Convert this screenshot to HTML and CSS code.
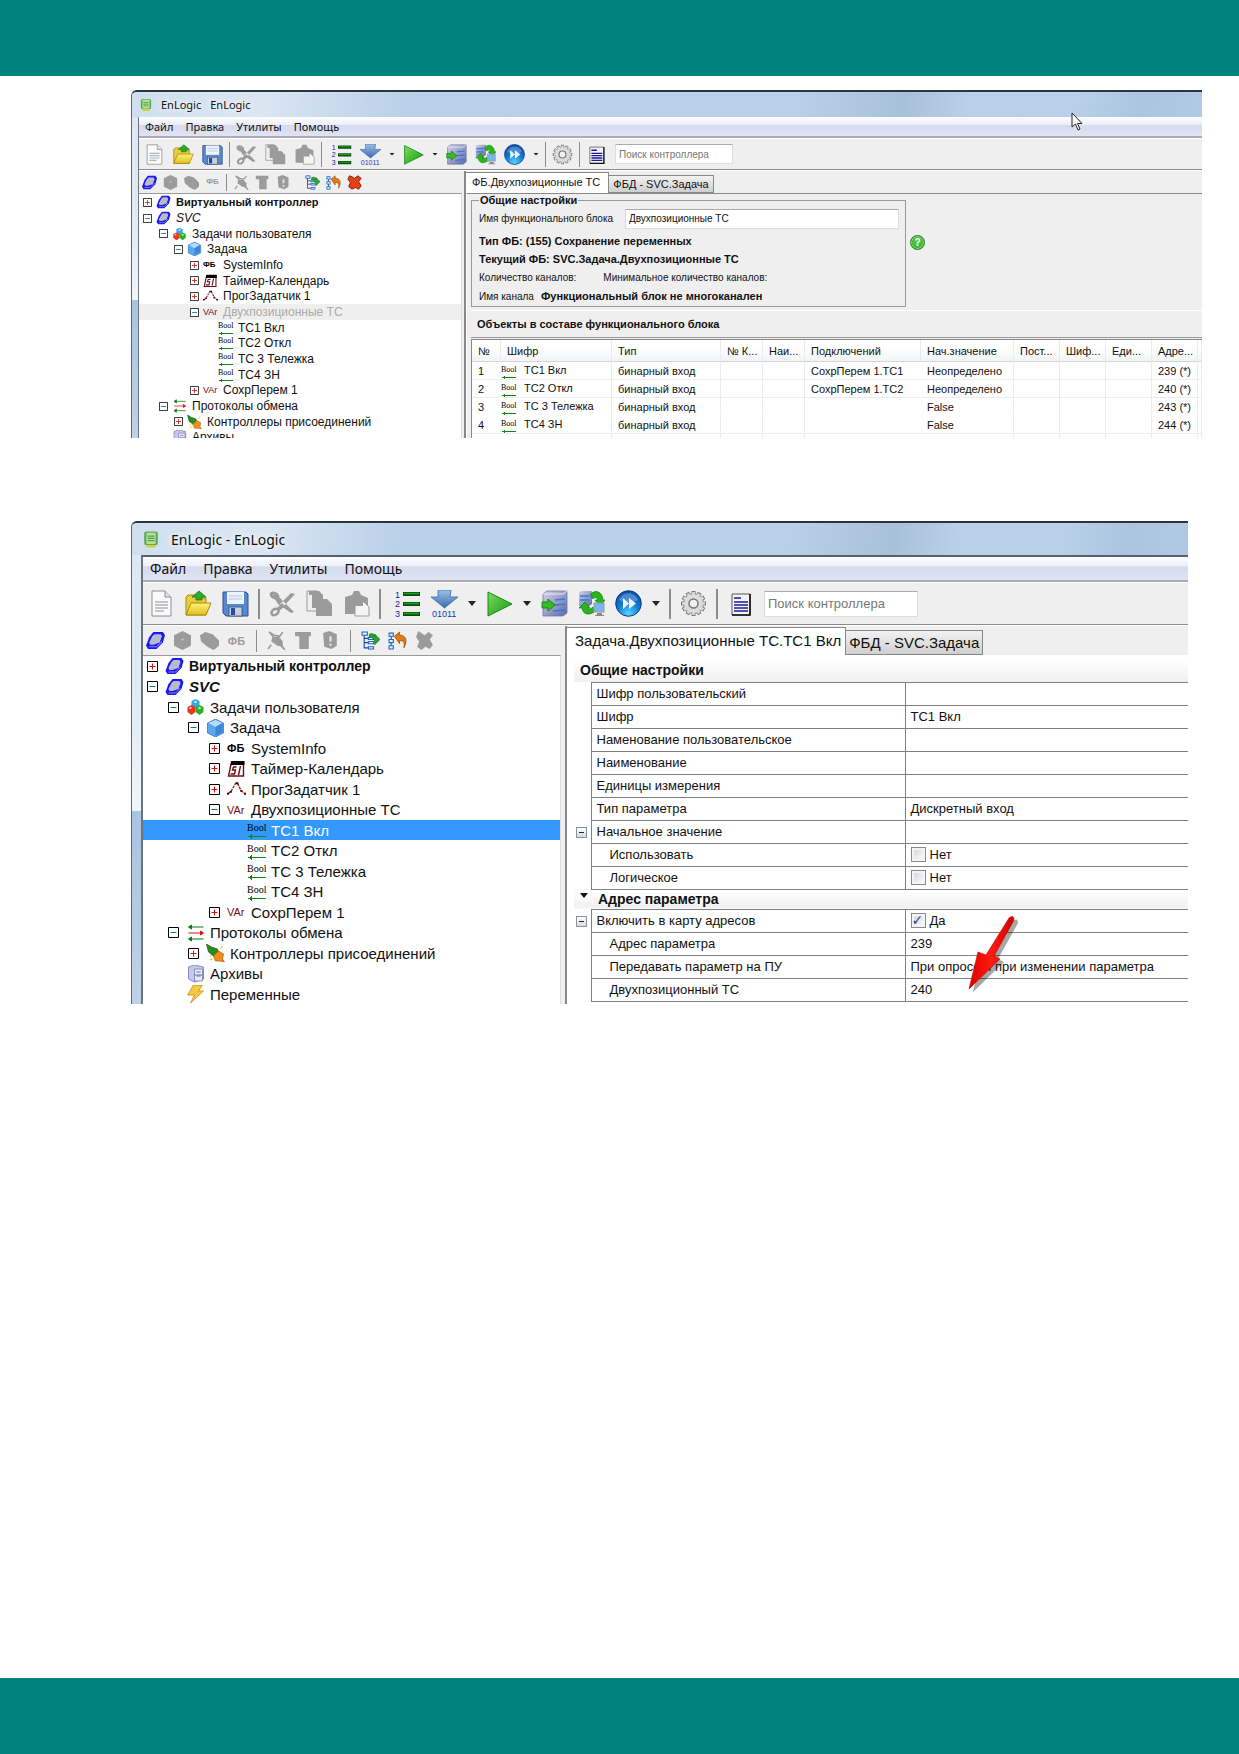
FILE: index.html
```html
<!DOCTYPE html>
<html lang="ru">
<head>
<meta charset="utf-8">
<meta name="viewport" content="width=device-width, initial-scale=1">
<title>EnLogic</title>
<link rel="stylesheet" href="styles.css">
</head>
<body>
<svg class="sprite" aria-hidden="true">
  <defs>
    <linearGradient id="g-steel" x1="0" y1="0" x2="0" y2="1"><stop offset="0" stop-color="#9cc0ea"/><stop offset="1" stop-color="#3c6cab"/></linearGradient>
    <linearGradient id="g-play" x1="0" y1="0" x2="1" y2="1"><stop offset="0" stop-color="#7fdc5a"/><stop offset="1" stop-color="#129a12"/></linearGradient>
    <linearGradient id="g-db" x1="0" y1="0" x2="1" y2="1"><stop offset="0" stop-color="#d4d4ea"/><stop offset="1" stop-color="#6068a8"/></linearGradient>
    <radialGradient id="g-ff" cx=".5" cy=".9" r=".9"><stop offset="0" stop-color="#58d8ff"/><stop offset=".5" stop-color="#1378d4"/><stop offset="1" stop-color="#0c4aa4"/></radialGradient>
    <linearGradient id="g-folder" x1="0" y1="0" x2="0" y2="1"><stop offset="0" stop-color="#fff27a"/><stop offset="1" stop-color="#e2be1e"/></linearGradient>
    <linearGradient id="g-arrow" x1="0" y1="0" x2="1" y2="0"><stop offset="0" stop-color="#e00000"/><stop offset=".5" stop-color="#ff1a10"/><stop offset="1" stop-color="#d00000"/></linearGradient>
  </defs>
  <symbol id="app" viewBox="0 0 14 16"><rect x="1" y="1" width="12" height="12" rx="2" fill="#5cae54"/><rect x="3" y="2" width="8" height="10" rx="1" fill="#b9e0a0"/><path d="M4 5h6M4 7h6M4 9h6" stroke="#5c9c4c"/><path d="M3 13h8v2H3z" fill="#d8d020"/></symbol>
  <symbol id="new" viewBox="0 0 27 27"><path d="M4 1h13l6 6v19H4z" fill="#fafafa" stroke="#8a8f96"/><path d="M17 1v6h6" fill="#dfe5ec" stroke="#8a8f96"/><path d="M7 12h13M7 15h13M7 18h13M7 21h9" stroke="#b0b4ba" stroke-width="1.4"/></symbol>
  <symbol id="open" viewBox="0 0 27 27"><path d="M1 25V7l2-2h7l2 3h9v17z" fill="#e8cc3a" stroke="#a98a10"/><path d="M1 25l5-12h20l-5 12z" fill="url(#g-folder)" stroke="#a98a10"/><path d="M14 1l7 6h-4v3h-6V7H7z" fill="#2fa82f" stroke="#15781c" stroke-width=".8"/></symbol>
  <symbol id="save" viewBox="0 0 27 27"><path d="M1 2h23l2 2v22H4l-3-3z" fill="#5a88cc" stroke="#2c4f92"/><rect x="5" y="2" width="17" height="12" fill="#eef3fb"/><path d="M7 6h13M7 9h13" stroke="#b5c4de"/><rect x="7" y="17" width="13" height="9" fill="#c9ced8" stroke="#2c4f92" stroke-width=".8"/><rect x="9" y="18" width="4" height="7" fill="#1f4f9e"/></symbol>
  <symbol id="cut" viewBox="0 0 27 27"><path d="M2 3l7 3 16 16-3 1L9 14zM26 4l-4-1L11 14l3 3z" fill="#9b9b9b"/><g fill="none" stroke="#9b9b9b" stroke-width="2.600"><ellipse cx="6" cy="22" rx="3.800" ry="2.800" transform="rotate(-35 6 22)"/><ellipse cx="5.500" cy="5.500" rx="3.800" ry="2.400" transform="rotate(25 5.500 5.500)"/></g><path d="M7 19l6-6 3 3-6 5z" fill="#9b9b9b"/></symbol>
  <symbol id="copy" viewBox="0 0 27 27"><path d="M1 1h10l5 5v15H1z" fill="#efefef" stroke="#9b9b9b"/><path d="M3 1h10l4 4v13H6V5H3z" fill="#9b9b9b"/><path d="M10 9h11l5 5v12H10z" fill="#9b9b9b"/></symbol>
  <symbol id="paste" viewBox="0 0 27 27"><path d="M2 7l7-2 2-4h5l2 4 7 3v16H2z" fill="#9b9b9b"/><path d="M12 12h9l5 5v9H12z" fill="#f4f4f4" stroke="#9b9b9b"/><path d="M12 12h8v4h-8z" fill="#9b9b9b"/></symbol>
  <symbol id="play" viewBox="0 0 27 27"><path d="M2 2l24 12L2 26z" fill="url(#g-play)" stroke="#15871a"/></symbol>
  <symbol id="server" viewBox="0 0 27 27"><path d="M2 4l4-3h20v22l-4 3H2z" fill="url(#g-db)" stroke="#7076a0" stroke-width=".8"/><path d="M2 4h20l4-3" fill="none" stroke="#e9e9f6"/><path d="M14 10l10-1M14 15l10-1M12 21l12-1" stroke="#2f7cd6" stroke-width="1.600"/><path d="M1 12h6V9l7 6-7 6v-3H1z" fill="#30c020" stroke="#157010" stroke-width=".8"/></symbol>
  <symbol id="swap" viewBox="0 0 27 27"><path d="M1 2l3-1h10v13l-3 2H1z" fill="url(#g-db)"/><path d="M2 6h9M2 10h9" stroke="#2f7cd6" stroke-width="1.600"/><path d="M12 5c5-6 12-4 13 5h2l-5 6-5-6h3c-1-3-4-3-5-1zM16 22c-6 4-11 2-12-4H1l6-6 5 6H9c1 2 4 1 6-1z" fill="#25b81c" stroke="#12700e" stroke-width=".7"/><rect x="16" y="13" width="10" height="9" fill="#76b6ec" stroke="#9a9a9a"/><path d="M19 23h5v2h2v1h-9v-1h2z" fill="#888"/></symbol>
  <symbol id="ff" viewBox="0 0 27 27"><circle cx="13.500" cy="13.500" r="12.800" fill="url(#g-ff)" stroke="#0b3a86"/><path d="M4 10c3-9 16-9 19 0-5 3-14 3-19 0z" fill="#fff" opacity=".25"/><path d="M8 8l6 5.500L8 19zM14 8l7 5.500-7 5.500z" fill="#eefaff"/></symbol>
  <symbol id="gear" viewBox="0 0 27 27"><path d="M1 13.500h25M13.500 1v25M2.700 7.200l21.600 12.600M2.700 19.800L24.300 7.200M7.200 2.700l12.600 21.600M19.800 2.700L7.200 24.300" stroke="#777" stroke-width="4"/><circle cx="13.500" cy="13.500" r="10" fill="#dcdcdc" stroke="#8a8a8a"/><path d="M2 13.500h23M13.500 2v23M3.600 7.700l19.800 11.600M3.600 19.300L23.400 7.700M7.700 3.600l11.600 19.800M19.300 3.600L7.700 23.400" stroke="#dcdcdc" stroke-width="2.600"/><circle cx="13.500" cy="13.500" r="4.500" fill="#efefef" stroke="#777" stroke-width="1.500"/></symbol>
  <symbol id="doc" viewBox="0 0 27 27"><path d="M5 4h18v21H5z" fill="#f4f4f4" stroke="#555"/><path d="M23 4v21H5" fill="none" stroke="#111" stroke-width="1.600"/><path d="M7 8h7M7 12h14M7 15h14M7 18h14M7 21h14" stroke="#1a1a9c" stroke-width="1.700"/></symbol>
  <symbol id="ctl" viewBox="0 0 18 18"><path d="M7 1h9l2 3-2 7-6 6H2l-2-3 3-8z" fill="#1a1af0"/><path d="M8 3h6l1 2-2 6-6 2H4l-1-2 3-6z" fill="#b8bad0"/><path d="M3 15h7l5-5" fill="none" stroke="#8088ff"/></symbol>
  <symbol id="hex" viewBox="0 0 18 18"><path d="M9 0l8 4v10l-8 4-8-4V4z" fill="#9b9b9b"/><circle cx="9" cy="8" r="1" fill="#ccc"/></symbol>
  <symbol id="blob" viewBox="0 0 18 18"><path d="M0 4l5-3 7 2 6 6v5l-5 4-6-3-6-5z" fill="#9b9b9b"/></symbol>
  <symbol id="plugoff" viewBox="0 0 18 18"><path d="M2 1l5 3 5 1 3-4M14 14l3 4M4 13l-3 4M2 1l14 16" fill="none" stroke="#9b9b9b" stroke-width="1.500"/><path d="M5 6l6-1 4 5v5l-5-1-6-4z" fill="#9b9b9b"/></symbol>
  <symbol id="bin" viewBox="0 0 18 18"><path d="M1 1h15v4h-2v12H5V5H1z" fill="#9b9b9b"/></symbol>
  <symbol id="bang" viewBox="0 0 18 18"><path d="M2 2l6-2 7 3v11l-5 3-7-2z" fill="#9b9b9b"/><path d="M9 5v5M9 12v2" stroke="#e8e8e8" stroke-width="2"/></symbol>
  <symbol id="treego" viewBox="0 0 18 18"><path d="M3 3v13h4M3 7h4M3 11h4" fill="none" stroke="#14489c"/><path d="M1 1h5v3H1zM7 6h5v2H7zM7 10h5v2H7zM7 15h5v2H7z" fill="#e4f4ff" stroke="#1e62bc"/><path d="M8 3c3-1 5 0 5 2V3l5 5-5 5v-3c-1-3-2-4-5-4z" fill="#2ca52c" stroke="#116a11" stroke-width=".7"/></symbol>
  <symbol id="treeback" viewBox="0 0 18 18"><path d="M3 4v11" stroke="#14489c"/><path d="M1 2h4v3H1zM1 8h4v3H1zM1 14h4v3H1z" fill="#e4f4ff" stroke="#1e62bc"/><path d="M6 5l5-4v3c6 0 8 5 4 12 1-5 0-7-4-7v3z" fill="#e07a1a" stroke="#9a4606" stroke-width=".7"/></symbol>
  <symbol id="xg" viewBox="0 0 18 18"><path d="M3 0l3 2 3 2 4-3 4 3-3 4 3 5-3 4-4-2-4 3-4-3 2-5-3-4z" fill="#9b9b9b"/></symbol>
  <symbol id="xr" viewBox="0 0 18 18"><path d="M3 1l3 1 3 2 4-3 4 3-3 4 3 5-3 4-4-2-4 2-4-3 2-5-3-4z" fill="#e5401a" stroke="#7c1404"/></symbol>
  <symbol id="plus" viewBox="0 0 11 11"><path d="M.5.5h10v10H.5z" fill="#fff" stroke="#000"/><path d="M2.500 5.500h6M5.500 2.500v6" stroke="#e01010"/></symbol>
  <symbol id="minus" viewBox="0 0 11 11"><path d="M.5.5h10v10H.5z" fill="#fff" stroke="#000"/><path d="M2.500 5.500h6" stroke="#008080"/></symbol>
  <symbol id="tasks" viewBox="0 0 18 18"><path d="M5 3l4-2 4 2v5l-4 2-4-2z" fill="#34a8ec"/><path d="M1 9l4-2 4 2v5l-4 3-4-3z" fill="#e8361c"/><path d="M9 9l4-2 4 2v5l-4 3-4-3z" fill="#2cb028"/><circle cx="4" cy="10" r="1.300" fill="#ffb0a0"/><circle cx="13" cy="10" r="1.300" fill="#c0f0b0"/><circle cx="9" cy="4" r="1.300" fill="#c8ecff"/></symbol>
  <symbol id="cube" viewBox="0 0 18 18"><path d="M9 0l8 4v10l-8 4-8-4V4z" fill="#58a8ec" stroke="#2c6cb8" stroke-width=".7"/><path d="M9 1l7 3-7 4-7-4z" fill="#b4dcff"/><path d="M9 8v9l7-4V4z" fill="#3c84d4"/></symbol>
  <symbol id="cal" viewBox="0 0 18 18"><path d="M4 2h12v14H1z" fill="#fff" stroke="#6b0f14" stroke-width="1.400"/><path d="M4 1h13v4H3z" fill="#000"/><path d="M9 7H6l-1 3h3l-1 4H3M13 6l-2 9" fill="none" stroke="#6b0f14" stroke-width="1.400"/></symbol>
  <symbol id="curve" viewBox="0 0 20 18"><path d="M1 14l3-2 5-9h2l4 8 4 3" fill="none" stroke="#8a1c20" stroke-width="1.400" stroke-dasharray="3 1"/><path d="M0 13h2v2H0zM3 11h2v2H3zM9 2h3v2H9zM14 10h2v2h-2zM18 13h2v2h-2z" fill="#400"/></symbol>
  <symbol id="proto" viewBox="0 0 18 18"><path d="M3 3h14M5 1L2 3l3 2z" stroke="#0c7a0c" fill="#0c7a0c"/><path d="M2 9h14M14 7l3 2-3 2z" stroke="#e01414" fill="#e01414"/><path d="M3 15h14M5 13l-3 2 3 2z" stroke="#0c7a0c" fill="#0c7a0c"/></symbol>
  <symbol id="plug" viewBox="0 0 18 18"><path d="M0 0l5 3 6 2 1 5-5 2-5-4z" fill="#2a8a20" stroke="#165a10" stroke-width=".7"/><path d="M7 12l5-5 5 3-1 5 2 3-4-1h-5z" fill="#f09018" stroke="#a85a08" stroke-width=".7"/><path d="M3 13l2-2M14 5l2-3M3 16l3-1" stroke="#e8c010"/></symbol>
  <symbol id="arch" viewBox="0 0 18 18"><path d="M2 2l6-2 9 2v12l-9 3-6-3z" fill="#c6c8e8" stroke="#7478b4" stroke-width=".8"/><path d="M8 4h8v12H8z" fill="#e8eafa" stroke="#7478b4" stroke-width=".8"/><path d="M10 7h4M10 11h4M8 10h8" stroke="#6a6eae"/></symbol>
  <symbol id="bolt" viewBox="0 0 18 18"><path d="M7 0h9l-4 6h5L4 18l4-8H1z" fill="#f8c840" stroke="#c88c10" stroke-width=".8"/></symbol>
</svg>

<header class="band"></header>
<main class="page">

<section class="win win--sm" aria-label="EnLogic, список объектов">
  <div class="title"><svg class="appicon"><use href="#app"/></svg><span>EnLogic</span><span>EnLogic</span></div>
  <div class="client">
    <nav class="menu"><a href="#">Файл</a><a href="#">Правка</a><a href="#">Утилиты</a><a href="#">Помощь</a></nav>
    <div class="toolbar">
      <button aria-label="Создать"><svg><use href="#new"/></svg></button>
      <button aria-label="Открыть"><svg><use href="#open"/></svg></button>
      <button aria-label="Сохранить"><svg><use href="#save"/></svg></button>
      <i class="sep"></i>
      <button aria-label="Вырезать"><svg><use href="#cut"/></svg></button>
      <button aria-label="Копировать"><svg><use href="#copy"/></svg></button>
      <button aria-label="Вставить"><svg><use href="#paste"/></svg></button>
      <i class="sep"></i>
      <button class="wide" aria-label="Нумерация"><svg viewBox="0 0 27 27"><path d="M9 4h17M9 14h17M9 24h17" stroke="#0b4d0b" stroke-width="4"/><path d="M10 3.500h15M10 13.500h15M10 23.500h15" stroke="#19a619" stroke-width="1.400"/><text x="1" y="8" class="ic-num">1</text><text x="1" y="17" class="ic-num">2</text><text x="1" y="27" class="ic-num">3</text></svg></button>
      <button aria-label="Загрузить"><svg viewBox="0 0 27 27"><path d="M7 0h13l-1 7h8L13.500 18 0 7h7z" fill="url(#g-steel)" stroke="#3a68a8" stroke-width=".8"/><text x="1" y="27" class="ic-bin">01011</text></svg></button>
      <button class="caret" aria-label="Варианты загрузки"></button>
      <button aria-label="Пуск"><svg><use href="#play"/></svg></button>
      <button class="caret" aria-label="Варианты пуска"></button>
      <button aria-label="Сервер"><svg><use href="#server"/></svg></button>
      <button aria-label="Обмен"><svg><use href="#swap"/></svg></button>
      <button aria-label="Далее"><svg><use href="#ff"/></svg></button>
      <button class="caret" aria-label="Ещё"></button>
      <i class="sep"></i>
      <button aria-label="Настройки"><svg><use href="#gear"/></svg></button>
      <i class="sep"></i>
      <button aria-label="Журнал"><svg><use href="#doc"/></svg></button>
      <input class="search" type="text" placeholder="Поиск контроллера" aria-label="Поиск контроллера">
    </div>
    <div class="panes">
      <div class="left">
        <div class="subbar">
          <button aria-label="Контроллер"><svg><use href="#ctl"/></svg></button>
          <button aria-label="Задача"><svg><use href="#hex"/></svg></button>
          <button aria-label="Группа"><svg><use href="#blob"/></svg></button>
          <button class="t-fb t-fb--off">ФБ</button>
          <i class="sep"></i>
          <button aria-label="Отключить"><svg><use href="#plugoff"/></svg></button>
          <button aria-label="Очистить"><svg><use href="#bin"/></svg></button>
          <button aria-label="Внимание"><svg><use href="#bang"/></svg></button>
          <i class="sep sep--blank"></i>
          <button aria-label="Развернуть"><svg><use href="#treego"/></svg></button>
          <button aria-label="Вернуть"><svg><use href="#treeback"/></svg></button>
          <button aria-label="Удалить"><svg><use href="#xr"/></svg></button>
        </div>
        <ul class="tree">
          <li class="l0 b"><svg class="ex"><use href="#plus"/></svg><svg class="ic"><use href="#ctl"/></svg>Виртуальный контроллер</li>
          <li class="l0 em"><svg class="ex"><use href="#minus"/></svg><svg class="ic"><use href="#ctl"/></svg>SVC</li>
          <li class="l1"><svg class="ex"><use href="#minus"/></svg><svg class="ic"><use href="#tasks"/></svg>Задачи пользователя</li>
          <li class="l2"><svg class="ex"><use href="#minus"/></svg><svg class="ic"><use href="#cube"/></svg>Задача</li>
          <li class="l3"><svg class="ex"><use href="#plus"/></svg><span class="ic t-fb">ФБ</span>SystemInfo</li>
          <li class="l3"><svg class="ex"><use href="#plus"/></svg><svg class="ic"><use href="#cal"/></svg>Таймер-Календарь</li>
          <li class="l3"><svg class="ex"><use href="#plus"/></svg><svg class="ic"><use href="#curve"/></svg>ПрогЗадатчик 1</li>
          <li class="l3 dim"><svg class="ex"><use href="#minus"/></svg><span class="ic t-var">VAr</span>Двухпозиционные ТС</li>
          <li class="l4"><i class="ex"></i><span class="ic t-bool">Bool</span>ТС1 Вкл</li>
          <li class="l4"><i class="ex"></i><span class="ic t-bool">Bool</span>ТС2 Откл</li>
          <li class="l4"><i class="ex"></i><span class="ic t-bool">Bool</span>ТС 3 Тележка</li>
          <li class="l4"><i class="ex"></i><span class="ic t-bool">Bool</span>ТС4 ЗН</li>
          <li class="l3"><svg class="ex"><use href="#plus"/></svg><span class="ic t-var">VAr</span>СохрПерем 1</li>
          <li class="l1"><svg class="ex"><use href="#minus"/></svg><svg class="ic"><use href="#proto"/></svg>Протоколы обмена</li>
          <li class="l2"><svg class="ex"><use href="#plus"/></svg><svg class="ic"><use href="#plug"/></svg>Контроллеры присоединений</li>
          <li class="l1"><i class="ex"></i><svg class="ic"><use href="#arch"/></svg>Архивы</li>
        </ul>
      </div>
      <div class="right">
        <div class="tabs"><button class="tab tab--on">ФБ.Двухпозиционные ТС</button><button class="tab">ФБД - SVC.Задача</button></div>
        <div class="sheet">
          <div class="info">
            <fieldset>
              <legend>Общие настройки</legend>
              <div class="row row--field"><label for="fbname">Имя функционального блока</label><input id="fbname" type="text" value="Двухпозиционные ТС"></div>
              <div class="row"><b>Тип ФБ: (155) Сохранение переменных</b></div>
              <div class="row"><b>Текущий ФБ: SVC.Задача.Двухпозиционные ТС</b></div>
              <div class="row row--gap"><span>Количество каналов:</span><span>Минимальное количество каналов:</span></div>
              <div class="row row--last"><span>Имя канала</span><b>Функциональный блок не многоканален</b></div>
            </fieldset>
            <button class="help" aria-label="Справка">?</button>
          </div>
          <h2 class="caption">Объекты в составе функционального блока</h2>
          <table class="objects">
            <colgroup><col class="c-no"><col class="c-code"><col class="c-type"><col class="c-chan"><col class="c-chan"><col class="c-conn"><col class="c-init"><col class="c-sm"><col class="c-sm"><col class="c-sm"><col class="c-sm"><col></colgroup>
            <thead><tr><th>№</th><th>Шифр</th><th>Тип</th><th>№ К...</th><th>Наи...</th><th>Подключений</th><th>Нач.значение</th><th>Пост...</th><th>Шиф...</th><th>Еди...</th><th>Адре...</th><th></th></tr></thead>
            <tbody>
              <tr><td>1</td><td class="code"><span class="t-bool">Bool</span>ТС1 Вкл</td><td>бинарный вход</td><td></td><td></td><td>СохрПерем 1.ТС1</td><td>Неопределено</td><td></td><td></td><td></td><td>239 (*)</td><td></td></tr>
              <tr><td>2</td><td class="code"><span class="t-bool">Bool</span>ТС2 Откл</td><td>бинарный вход</td><td></td><td></td><td>СохрПерем 1.ТС2</td><td>Неопределено</td><td></td><td></td><td></td><td>240 (*)</td><td></td></tr>
              <tr class="open"><td>3</td><td class="code"><span class="t-bool">Bool</span>ТС 3 Тележка</td><td>бинарный вход</td><td></td><td></td><td></td><td>False</td><td></td><td></td><td></td><td>243 (*)</td><td></td></tr>
              <tr><td>4</td><td class="code"><span class="t-bool">Bool</span>ТС4 ЗН</td><td>бинарный вход</td><td></td><td></td><td></td><td>False</td><td></td><td></td><td></td><td>244 (*)</td><td></td></tr>
            </tbody>
            <tfoot><tr><td></td><td></td><td></td><td></td><td></td><td></td><td></td><td></td><td></td><td></td><td></td><td></td></tr></tfoot>
          </table>
        </div>
      </div>
    </div>
  </div>
  <svg class="cursor" viewBox="0 0 12 19" aria-hidden="true"><path d="M1 1v14l3.500-3 2.500 6 2-1-2.500-5.500H11z" fill="#fff" stroke="#222"/></svg>
</section>

<section class="win win--lg" aria-label="EnLogic, параметры ТС1">
  <div class="title"><svg class="appicon"><use href="#app"/></svg><span>EnLogic - EnLogic</span></div>
  <div class="client">
    <nav class="menu"><a href="#">Файл</a><a href="#">Правка</a><a href="#">Утилиты</a><a href="#">Помощь</a></nav>
    <div class="toolbar">
      <button aria-label="Создать"><svg><use href="#new"/></svg></button>
      <button aria-label="Открыть"><svg><use href="#open"/></svg></button>
      <button aria-label="Сохранить"><svg><use href="#save"/></svg></button>
      <i class="sep"></i>
      <button aria-label="Вырезать"><svg><use href="#cut"/></svg></button>
      <button aria-label="Копировать"><svg><use href="#copy"/></svg></button>
      <button aria-label="Вставить"><svg><use href="#paste"/></svg></button>
      <i class="sep"></i>
      <button class="wide" aria-label="Нумерация"><svg viewBox="0 0 27 27"><path d="M9 4h17M9 14h17M9 24h17" stroke="#0b4d0b" stroke-width="4"/><path d="M10 3.500h15M10 13.500h15M10 23.500h15" stroke="#19a619" stroke-width="1.400"/><text x="1" y="8" class="ic-num">1</text><text x="1" y="17" class="ic-num">2</text><text x="1" y="27" class="ic-num">3</text></svg></button>
      <button aria-label="Загрузить"><svg viewBox="0 0 27 27"><path d="M7 0h13l-1 7h8L13.500 18 0 7h7z" fill="url(#g-steel)" stroke="#3a68a8" stroke-width=".8"/><text x="1" y="27" class="ic-bin">01011</text></svg></button>
      <button class="caret" aria-label="Варианты загрузки"></button>
      <button aria-label="Пуск"><svg><use href="#play"/></svg></button>
      <button class="caret" aria-label="Варианты пуска"></button>
      <button aria-label="Сервер"><svg><use href="#server"/></svg></button>
      <button aria-label="Обмен"><svg><use href="#swap"/></svg></button>
      <button aria-label="Далее"><svg><use href="#ff"/></svg></button>
      <button class="caret" aria-label="Ещё"></button>
      <i class="sep"></i>
      <button aria-label="Настройки"><svg><use href="#gear"/></svg></button>
      <i class="sep"></i>
      <button aria-label="Журнал"><svg><use href="#doc"/></svg></button>
      <input class="search" type="text" placeholder="Поиск контроллера" aria-label="Поиск контроллера">
    </div>
    <div class="panes">
      <div class="left">
        <div class="subbar">
          <button aria-label="Контроллер"><svg><use href="#ctl"/></svg></button>
          <button aria-label="Задача"><svg><use href="#hex"/></svg></button>
          <button aria-label="Группа"><svg><use href="#blob"/></svg></button>
          <button class="t-fb t-fb--off">ФБ</button>
          <i class="sep"></i>
          <button aria-label="Отключить"><svg><use href="#plugoff"/></svg></button>
          <button aria-label="Очистить"><svg><use href="#bin"/></svg></button>
          <button aria-label="Внимание"><svg><use href="#bang"/></svg></button>
          <i class="sep"></i>
          <button aria-label="Развернуть"><svg><use href="#treego"/></svg></button>
          <button aria-label="Вернуть"><svg><use href="#treeback"/></svg></button>
          <button aria-label="Удалить"><svg><use href="#xg"/></svg></button>
        </div>
        <ul class="tree">
          <li class="l0 b"><svg class="ex"><use href="#plus"/></svg><svg class="ic"><use href="#ctl"/></svg>Виртуальный контроллер</li>
          <li class="l0 em"><svg class="ex"><use href="#minus"/></svg><svg class="ic"><use href="#ctl"/></svg>SVC</li>
          <li class="l1"><svg class="ex"><use href="#minus"/></svg><svg class="ic"><use href="#tasks"/></svg>Задачи пользователя</li>
          <li class="l2"><svg class="ex"><use href="#minus"/></svg><svg class="ic"><use href="#cube"/></svg>Задача</li>
          <li class="l3"><svg class="ex"><use href="#plus"/></svg><span class="ic t-fb">ФБ</span>SystemInfo</li>
          <li class="l3"><svg class="ex"><use href="#plus"/></svg><svg class="ic"><use href="#cal"/></svg>Таймер-Календарь</li>
          <li class="l3"><svg class="ex"><use href="#plus"/></svg><svg class="ic"><use href="#curve"/></svg>ПрогЗадатчик 1</li>
          <li class="l3"><svg class="ex"><use href="#minus"/></svg><span class="ic t-var">VAr</span>Двухпозиционные ТС</li>
          <li class="l4 sel"><i class="ex"></i><span class="ic t-bool">Bool</span>ТС1 Вкл</li>
          <li class="l4"><i class="ex"></i><span class="ic t-bool">Bool</span>ТС2 Откл</li>
          <li class="l4"><i class="ex"></i><span class="ic t-bool">Bool</span>ТС 3 Тележка</li>
          <li class="l4"><i class="ex"></i><span class="ic t-bool">Bool</span>ТС4 ЗН</li>
          <li class="l3"><svg class="ex"><use href="#plus"/></svg><span class="ic t-var">VAr</span>СохрПерем 1</li>
          <li class="l1"><svg class="ex"><use href="#minus"/></svg><svg class="ic"><use href="#proto"/></svg>Протоколы обмена</li>
          <li class="l2"><svg class="ex"><use href="#plus"/></svg><svg class="ic"><use href="#plug"/></svg>Контроллеры присоединений</li>
          <li class="l1"><i class="ex"></i><svg class="ic"><use href="#arch"/></svg>Архивы</li>
          <li class="l1"><i class="ex"></i><svg class="ic"><use href="#bolt"/></svg>Переменные</li>
        </ul>
      </div>
      <div class="right">
        <div class="tabs"><button class="tab tab--on">Задача.Двухпозиционные ТС.ТС1 Вкл</button><button class="tab">ФБД - SVC.Задача</button></div>
        <div class="sheet">
          <table class="props">
            <colgroup><col class="p-gut"><col class="p-name"><col></colgroup>
            <tbody>
              <tr class="sec sec--first"><th colspan="3">Общие настройки</th></tr>
              <tr><td></td><th>Шифр пользовательский</th><td></td></tr>
              <tr><td></td><th>Шифр</th><td>ТС1 Вкл</td></tr>
              <tr><td></td><th>Наменование пользовательское</th><td></td></tr>
              <tr><td></td><th>Наименование</th><td></td></tr>
              <tr><td></td><th>Единицы измерения</th><td></td></tr>
              <tr><td></td><th>Тип параметра</th><td>Дискретный вход</td></tr>
              <tr><td><button class="fold" aria-label="Свернуть"></button></td><th>Начальное значение</th><td></td></tr>
              <tr><td></td><th class="sub">Использовать</th><td><label><input type="checkbox">Нет</label></td></tr>
              <tr><td></td><th class="sub">Логическое</th><td><label><input type="checkbox">Нет</label></td></tr>
              <tr class="sec"><th colspan="3"><span class="tri"></span>Адрес параметра</th></tr>
              <tr><td><button class="fold" aria-label="Свернуть"></button></td><th>Включить в карту адресов</th><td><label><input type="checkbox" checked>Да</label></td></tr>
              <tr><td></td><th class="sub">Адрес параметра</th><td>239</td></tr>
              <tr><td></td><th class="sub">Передавать параметр на ПУ</th><td>При опросе и при изменении параметра</td></tr>
              <tr><td></td><th class="sub">Двухпозиционный ТС</th><td>240</td></tr>
            </tbody>
          </table>
        </div>
      </div>
    </div>
  </div>
  <svg class="pointer" viewBox="0 0 60 84" aria-hidden="true"><path d="M46 5q5-4 5 2L31 43l6 3L6 76l9-37 8 3z" transform="translate(4 3)" fill="#000" opacity=".35"/><path d="M46 5q5-4 5 2L31 43l6 3L6 76l9-37 8 3z" fill="url(#g-arrow)" stroke="#b00" stroke-width=".6"/></svg>
</section>

</main>
<footer class="band"></footer>
</body>
</html>
```
FILE: styles.css
```css
* { box-sizing: border-box; }
body {
  margin: 0;
  min-height: 100vh;
  display: flex;
  flex-direction: column;
  background: #fff;
  color: #111;
  font-family: "Liberation Sans", Arial, sans-serif;
}
button, input { font: inherit; color: inherit; }
button { border: 0; padding: 0; background: none; }
svg { display: block; }
.sprite { position: absolute; width: 0; height: 0; }
.band { height: 76px; flex: none; background: #00827f; }
.page { flex: 1; padding: 14px 37px 0 131px; }

/* window frame */
.win {
  --frame: 6px;
  --icon: 21px;
  --gap: 8px;
  --small: 15px;
  --small-gap: 6px;
  position: relative;
  padding-left: var(--frame);
  border-top: 2px solid #2a3440;
  border-left: 1px solid #5a6672;
  border-top-left-radius: 6px;
  overflow: hidden;
  background: linear-gradient(#dbe7f3 0, #e2ecf6 40%, #f0f5fa 60%, #a9c4e0 60%, #bdd2e8 100%) left / 9px 100% no-repeat, #bad1e8;
  font-size: 12px;
}
.win--lg {
  --frame: 9px;
  --icon: 27px;
  --gap: 10px;
  --small: 19px;
  --small-gap: 8px;
  margin: 83px 14px 0 0;
  font-size: 15px;
}
.title {
  display: flex;
  align-items: center;
  gap: 9px;
  height: 25px;
  margin-left: calc(0px - var(--frame));
  padding-left: 8px;
  background: linear-gradient(100deg, #cfdfee 0, #dbe6f2 12%, #b9d0e8 26%, #b9d0e8 62%, #a8c0d8 72%, #b9d0e8 78%, #b9d0e8 88%, #adc4e0 94%, #b2c9e4 100%);
  font-family: "Noto Sans", "Open Sans", sans-serif;
  font-size: 11px;
  text-shadow: 0 0 6px #fff, 0 0 10px #fff;
}
.appicon { width: 12px; height: 14px; }
.win--lg .title { height: 32px; font-size: 14px; gap: 12px; padding-left: 11px; }
.win--lg .appicon { width: 16px; height: 19px; }
.client { border-left: 1px solid #6a7480; background: #efefef; }
.win--lg .client { border-left: 2px solid #6a7480; border-top: 2px solid #56606c; }
.menu {
  display: flex;
  gap: 12px;
  height: 21px;
  padding: 0 6px;
  align-items: center;
  border-bottom: 2px solid #a9aab2;
  background: linear-gradient(#fcfdff, #eceff8 40%, #d5daec 42%, #e0e4f4);
  font-family: "Noto Sans", "Open Sans", sans-serif;
  font-size: 11px;
}
.menu a { color: #111; text-decoration: none; }
.win--lg .menu { height: 25px; gap: 17px; padding: 0 7px; font-size: 14px; }

.toolbar {
  display: flex;
  align-items: center;
  gap: var(--gap);
  height: 32px;
  padding-left: 5px;
  border-top: 1px solid #fff;
  border-bottom: 1px solid #8c8c8c;
}
.win--lg .toolbar { height: 43px; }
.toolbar button { flex: none; width: var(--icon); display: flex; justify-content: flex-end; }
.toolbar svg { flex: none; width: var(--icon); height: var(--icon); }
.toolbar .wide { width: 24px; }
.win--lg .toolbar .wide { width: 31px; }
.sep { flex: none; width: 1px; height: 25px; margin: 0 -2px; background: #8c8c8c; }
.win--lg .sep { width: 2px; height: 30px; margin: 0 -1px; }
.toolbar .caret { width: 6px; height: 3px; background: #222; clip-path: polygon(0 0, 100% 0, 50% 100%); }
.win--lg .toolbar .caret { width: 8px; height: 5px; }
.search { width: 118px; height: 20px; padding: 0 3px; border: 1px solid #ddd; border-top-color: #aaa; background: #fff; font-size: 10px; }
.search::placeholder { color: #777; opacity: 1; }
.win--lg .search { width: 154px; height: 26px; font-size: 13px; }

.panes { display: grid; grid-template-columns: 323px 1fr; column-gap: 2px; border-top: 1px solid #fff; }
.win--lg .panes { grid-template-columns: 418px 1fr; column-gap: 4px; }
.left { display: flex; flex-direction: column; min-width: 0; }
.subbar { display: flex; align-items: center; gap: var(--small-gap); height: 22px; padding-left: 3px; flex: none; }
.win--lg .subbar { height: 29px; }
.subbar svg, .subbar button { flex: none; width: var(--small); height: var(--small); }
.subbar .sep { height: 17px; margin: 0 1px 0 0; }
.win--lg .subbar .sep { height: 22px; width: 1px; margin: 0 2px; }
.subbar .sep--blank { background: none; }

/* project tree */
.tree {
  flex: 1 1 0;
  height: 0;
  min-height: 0;
  overflow: hidden;
  margin: 0;
  padding: 0;
  list-style: none;
  border-top: 1px solid #999;
  border-right: 1px solid #ddd;
  background: #fff;
}
.tree li { display: flex; align-items: center; height: 16px; padding-left: 4px; white-space: nowrap; }
.tree li:nth-child(3n) { height: 15px; }
.win--lg .tree li { height: 20px; }
.win--lg .tree li:nth-child(even) { height: 21px; }
.ex { flex: none; width: 9px; height: 9px; margin-right: 4px; }
.ic { flex: none; width: 15px; height: 14px; margin-right: 5px; }
.win--lg .ex { width: 11px; height: 11px; margin-right: 7px; }
.win--lg .ic { width: 19px; height: 18px; margin-right: 5px; }
.tree .l1 { padding-left: 20px; }
.tree .l2 { padding-left: 35px; }
.tree .l3 { padding-left: 51px; }
.tree .l4 { padding-left: 66px; }
.win--lg .tree .l1 { padding-left: 25px; }
.win--lg .tree .l2 { padding-left: 45px; }
.win--lg .tree .l3 { padding-left: 66px; }
.win--lg .tree .l4 { padding-left: 86px; }
.tree .b { font-weight: bold; font-size: 11px; }
.win--lg .tree .b { font-size: 14px; }
.tree .em { font-style: italic; font-weight: bold; }
.win--sm .tree .em { font-weight: normal; }
.tree .dim { background: #efefef; color: #aaa; }
.tree .sel { background: #3399ff; color: #fff; outline: 1px dotted #c87820; outline-offset: -1px; }

.ic-num { font: 9px "Liberation Sans", sans-serif; fill: #1a1a9c; }
.ic-bin { font: 9px "Liberation Sans", sans-serif; fill: #1a3cb0; }
.t-fb, .t-var, .t-bool { display: block; line-height: 14px; white-space: nowrap; }
.t-fb { font-size: 8px; font-weight: bold; color: #000; }
.t-fb--off { color: #9b9b9b; }
.t-var { font-size: 9px; color: #7a0c10; }
.t-bool {
  padding-right: 0;
  background:
    linear-gradient(#0c8a0c, #0c8a0c) 1px 12px / 14px 1px no-repeat,
    linear-gradient(#0c8a0c, #0c8a0c) 3px 11px / 1px 3px no-repeat;
  color: #000;
  font: 8px/10px "Liberation Serif", serif;
}
.win--lg .t-fb, .win--lg .t-var { font-size: 11px; line-height: 18px; }
.win--lg .t-bool {
  background:
    linear-gradient(#0c8a0c, #0c8a0c) 1px 15px / 18px 1px no-repeat,
    linear-gradient(#0c8a0c, #0c8a0c) 3px 14px / 1px 3px no-repeat,
    linear-gradient(#0c8a0c, #0c8a0c) 4px 13px / 1px 5px no-repeat;
  font-size: 10px;
  line-height: 13px;
}

/* right pane */
.right { display: flex; flex-direction: column; min-width: 0; border-left: 2px solid #888; }
.tabs { display: flex; align-items: flex-end; height: 22px; }
.tab {
  height: 18px;
  padding: 0 4px;
  border: 1px solid #888;
  border-left: 0;
  background: linear-gradient(#f2f2f2, #cfcfcf);
  white-space: nowrap;
}
.tab--on { height: 21px; padding: 0 8px 2px 6px; border-bottom: 0; background: #fff; }
.win--sm .tab { font-size: 11px; }
.win--lg .tabs { height: 29px; }
.win--lg .tab { height: 25px; padding: 0 3px; }
.win--lg .tab--on { height: 28px; padding: 0 4px 2px 8px; }
.sheet { flex: 1; }
.win--sm .sheet { padding-left: 4px; border-top: 1px solid #888; border-left: 1px solid #fff; }
.win--lg .sheet { padding: 4px 0 2px 7px; background: #fff; }

.info { display: flex; align-items: center; gap: 4px; padding-bottom: 3px; border-bottom: 1px solid #fff; }
fieldset { width: 435px; margin: 0; padding: 1px 6px 0 7px; border: 1px solid #999; }
legend { padding: 0 1px; font-size: 11px; font-weight: bold; line-height: 13px; }
.row { display: flex; align-items: center; height: 18px; white-space: nowrap; font-size: 11px; }
.row--field { height: 21px; margin-bottom: 3px; font-size: 10px; justify-content: space-between; }
.row--field input { width: 274px; height: 20px; padding: 0 3px; border: 1px solid #ddd; border-top-color: #aaa; background: #fff; }
.row--gap { gap: 27px; font-size: 10px; }
.row--last { gap: 7px; height: 20px; }
.row--last span { font-size: 10px; }
.help { width: 15px; height: 15px; margin-bottom: 16px; border-radius: 50%; border: 1px solid #1c7a1c; background: radial-gradient(#5cd048, #28a028); box-shadow: inset 0 0 0 1px #8ee080; color: #fff; font-size: 10px; font-weight: bold; line-height: 13px; }
.caption { margin: 0; height: 27px; padding-left: 6px; font-size: 11px; line-height: 27px; border-bottom: 1px solid #999; }

.objects { width: 100%; margin-top: 1px; table-layout: fixed; border-collapse: separate; border-spacing: 0; border-top: 1px solid #888; border-left: 1px solid #888; background: #fff; font-size: 11px; }
.objects th, .objects td { height: 18px; padding: 0 0 0 6px; border-right: 1px solid #e8ecf0; border-bottom: 1px solid #ececec; text-align: left; font-weight: normal; white-space: nowrap; overflow: hidden; line-height: 16px; }
.objects th { height: 22px; background: linear-gradient(#fff 40%, #f1f3f5); border-bottom-color: #d5d5d5; }
.objects .open td { border-bottom-color: #fff; }
.objects td:nth-child(1), .objects td:nth-child(6) { border-right-color: #fff; }
.objects .code { padding-left: 0; }
.objects tfoot td { height: 4px; border-bottom: 0; }
.code .t-bool { display: inline-block; width: 15px; height: 14px; margin-right: 8px; vertical-align: middle; }
.c-no { width: 29px; }
.c-code { width: 111px; }
.c-type { width: 109px; }
.c-chan { width: 42px; }
.c-conn { width: 116px; }
.c-init { width: 93px; }
.c-sm { width: 46px; }

.props { width: 100%; table-layout: fixed; border-collapse: collapse; font-size: 13px; }
.p-gut { width: 17px; }
.p-name { width: 314px; }
.props td, .props th { height: 23px; padding: 0 5px; border: 1px solid #808080; text-align: left; font-weight: normal; line-height: 16px; white-space: nowrap; }
.props tr > :first-child { border-left: 0; border-top: 0; border-bottom: 0; padding: 0; }
.props tr > :last-child { border-right: 0; }
.props .sub { padding-left: 18px; }
.props .sec > th { height: 20px; padding-left: 6px; font-size: 14px; font-weight: bold; background: linear-gradient(#fff, #f0f0f0); }
.props .sec--first > th { height: 23px; }
.tri { display: inline-block; width: 8px; height: 5px; margin-right: 10px; vertical-align: 6px; background: #111; clip-path: polygon(0 0, 100% 0, 50% 100%); }
.fold { display: block; width: 11px; height: 11px; margin: 2px 0 0 2px; border: 1px solid #8a929a; background: linear-gradient(#222, #222) center / 5px 1px no-repeat, linear-gradient(#fff, #d4d8dc); }
.props label { display: flex; align-items: center; gap: 4px; }
.props input { appearance: none; width: 15px; height: 15px; margin: 0; border: 1px solid #8a8a8a; background: linear-gradient(135deg, #cfd3d8, #fff); box-shadow: inset 0 0 0 2px #f4f4f4; }
.props input:checked::before { content: "✓"; display: block; font: bold 14px/13px "DejaVu Sans", sans-serif; color: #24459c; }

/* overlays */
.cursor { position: absolute; left: 939px; top: 20px; width: 12px; height: 19px; }
.pointer { position: absolute; left: 831px; top: 390px; width: 60px; height: 84px; }
```
